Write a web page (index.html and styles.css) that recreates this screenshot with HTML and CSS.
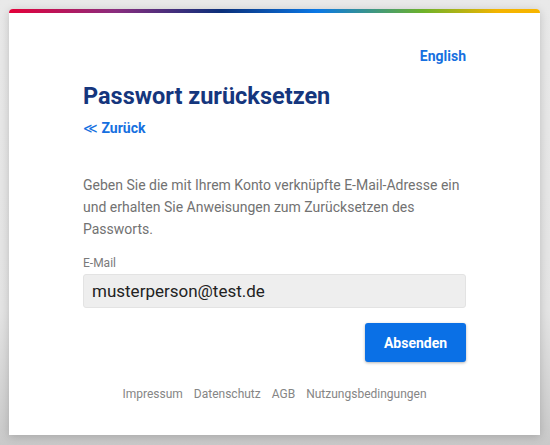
FILE: index.html
```html
<!DOCTYPE html>
<html lang="de">
<head>
<meta charset="utf-8">
<title>Passwort zurücksetzen</title>
<link rel="stylesheet" href="styles.css">
</head>
<body>
<div class="card">
  <div class="rainbow"></div>
  <div class="content">
    <div class="lang-row"><a class="lang" href="#">English</a></div>
    <h1 class="title">Passwort zurücksetzen</h1>
    <a class="back" href="#"><span class="chev">&#8810;</span> Zurück</a>
    <p class="intro">Geben Sie die mit Ihrem Konto verknüpfte E-Mail-Adresse ein und erhalten Sie Anweisungen zum Zurücksetzen des Passworts.</p>
    <label class="label" for="email">E-Mail</label>
    <input class="input" id="email" type="text" value="musterperson@test.de">
    <div class="actions"><button class="btn" type="button">Absenden</button></div>
    <nav class="footer">
      <a href="#">Impressum</a>
      <a href="#">Datenschutz</a>
      <a href="#">AGB</a>
      <a href="#">Nutzungsbedingungen</a>
    </nav>
  </div>
</div>
</body>
</html>
```

FILE: styles.css
```css
html, body {
  margin: 0;
  height: 100%;
}
body {
  background: linear-gradient(#e9e9e9, #e4e4e4 70%, #c9c9c9);
  padding: 9px 10px 0 9px;
  box-sizing: border-box;
  font-family: Roboto, "Liberation Sans", sans-serif;
}
.card {
  background: #fff;
  height: 426px;
  border-radius: 4px 4px 0 0;
  box-shadow: 0 2px 10px rgba(0,0,0,0.18);
  overflow: hidden;
  display: flex;
  flex-direction: column;
}
.rainbow {
  height: 4px;
  flex: none;
  background: linear-gradient(90deg, #e4003a 0%, #8a2d7e 20%, #0a2f7a 40%, #0a78e6 58%, #6db22a 78%, #f4b400 92%, #f7b500 100%);
}
.content {
  padding: 35px 74px 0 74px;
  display: flex;
  flex-direction: column;
}
.lang-row {
  display: flex;
  justify-content: flex-end;
}
.lang {
  color: #1670e0;
  font-weight: 700;
  font-size: 14px;
  line-height: 17px;
  text-decoration: none;
}
.title {
  margin: 17px 0 0 0;
  font-size: 23.5px;
  line-height: 29px;
  font-weight: 700;
  color: #15367d;
}
.back {
  margin-top: 9px;
  color: #1670e0;
  font-weight: 700;
  font-size: 14px;
  line-height: 17px;
  text-decoration: none;
  align-self: flex-start;
}
.chev {
  font-weight: 400;
}
.intro {
  margin: 37px 0 0 0;
  font-size: 14px;
  line-height: 22px;
  color: #727272;
}
.label {
  margin-top: 16px;
  font-size: 12px;
  line-height: 15px;
  color: #7a7a7a;
}
.input {
  margin-top: 3px;
  height: 34px;
  box-sizing: border-box;
  border: 1px solid #e3e3e3;
  border-radius: 3px;
  background: #eeeeee;
  padding: 0 8px;
  font-family: Roboto, "Liberation Sans", sans-serif;
  font-size: 17px;
  color: #222;
}
.actions {
  display: flex;
  justify-content: flex-end;
  margin-top: 15px;
}
.btn {
  width: 101px;
  height: 39px;
  border: none;
  border-radius: 3px;
  background: #0a70e6;
  color: #fff;
  font-family: Roboto, "Liberation Sans", sans-serif;
  font-weight: 700;
  font-size: 14px;
  box-shadow: 0 1px 3px rgba(0,0,0,0.3);
}
.footer {
  margin-top: 24px;
  display: flex;
  justify-content: center;
  gap: 11px;
}
.footer a {
  color: #858585;
  font-size: 12px;
  line-height: 16px;
  text-decoration: none;
}
```
